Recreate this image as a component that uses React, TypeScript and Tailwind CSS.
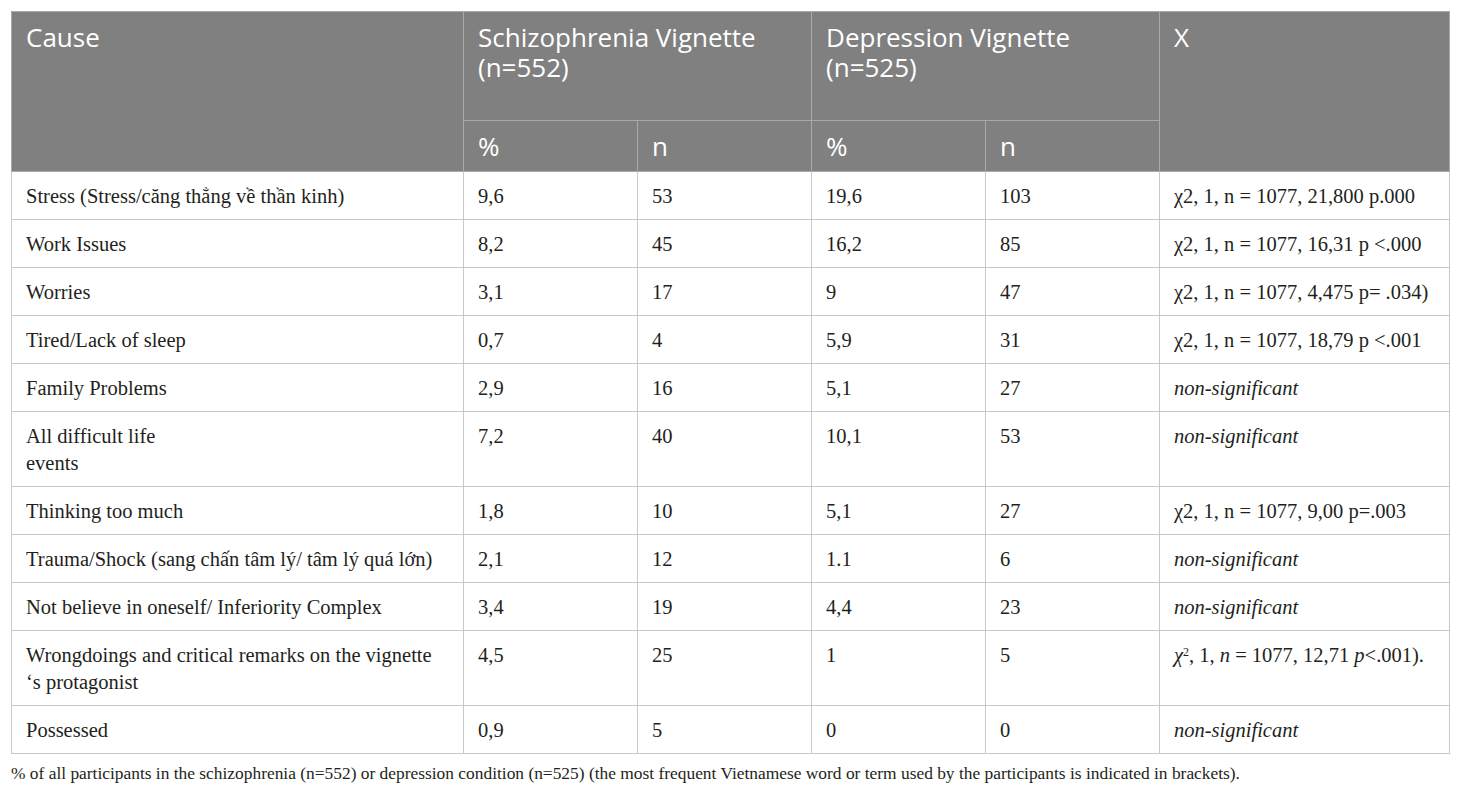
import React, { FC, ReactNode } from 'react';

type Row = {
  cause: ReactNode;
  sp: string;
  sn: string;
  dp: string;
  dn: string;
  x: ReactNode;
};

const NS = <span className="italic">non-significant</span>;

const rows: Row[] = [
  { cause: 'Stress (Stress/căng thẳng về thần kinh)', sp: '9,6', sn: '53', dp: '19,6', dn: '103', x: 'χ2, 1, n = 1077, 21,800 p.000' },
  { cause: 'Work Issues', sp: '8,2', sn: '45', dp: '16,2', dn: '85', x: 'χ2, 1, n = 1077, 16,31 p <.000' },
  { cause: 'Worries', sp: '3,1', sn: '17', dp: '9', dn: '47', x: 'χ2, 1, n = 1077, 4,475 p= .034)' },
  { cause: 'Tired/Lack of sleep', sp: '0,7', sn: '4', dp: '5,9', dn: '31', x: 'χ2, 1, n = 1077, 18,79 p <.001' },
  { cause: 'Family Problems', sp: '2,9', sn: '16', dp: '5,1', dn: '27', x: NS },
  {
    cause: (
      <>
        All difficult life
        <br />
        events
      </>
    ),
    sp: '7,2',
    sn: '40',
    dp: '10,1',
    dn: '53',
    x: NS,
  },
  { cause: 'Thinking too much', sp: '1,8', sn: '10', dp: '5,1', dn: '27', x: 'χ2, 1, n = 1077, 9,00 p=.003' },
  { cause: 'Trauma/Shock (sang chấn tâm lý/ tâm lý quá lớn)', sp: '2,1', sn: '12', dp: '1.1', dn: '6', x: NS },
  { cause: 'Not believe in oneself/ Inferiority Complex', sp: '3,4', sn: '19', dp: '4,4', dn: '23', x: NS },
  {
    cause: (
      <>
        Wrongdoings and critical remarks on the vignette
        <br />
        ‘s protagonist
      </>
    ),
    sp: '4,5',
    sn: '25',
    dp: '1',
    dn: '5',
    x: (
      <>
        <span className="italic">χ</span>
        <sup className="text-[12px]">2</sup>, 1, <span className="italic">n</span> = 1077, 12,71{' '}
        <span className="italic">p</span>&lt;.001).
      </>
    ),
  },
  { cause: 'Possessed', sp: '0,9', sn: '5', dp: '0', dn: '0', x: NS },
];

const th =
  'border border-[#a9a9a9] px-[14px] text-left align-top font-normal text-white';
const td = 'border border-[#c8c8c8] px-[14px] pt-[11px] pb-[9px] align-top';

const App: FC = () => {
  return (
    <div className="min-h-[793px] w-[1460px] bg-white pl-[11px] pt-[11px]">
      <table className="w-[1438px] table-fixed border-collapse border border-[#c8c8c8]">
        <colgroup>
          <col className="w-[452px]" />
          <col className="w-[174px]" />
          <col className="w-[174px]" />
          <col className="w-[174px]" />
          <col className="w-[174px]" />
          <col className="w-[290px]" />
        </colgroup>
        <thead className="bg-[#808080] font-['Open_Sans',sans-serif] text-[26px] leading-[30px]">
          <tr className="h-[109px]">
            <th rowSpan={2} className={`${th} pt-[10px]`}>
              Cause
            </th>
            <th colSpan={2} className={`${th} pt-[10px]`}>
              Schizophrenia Vignette
              <br />
              (n=552)
            </th>
            <th colSpan={2} className={`${th} pt-[10px]`}>
              Depression Vignette
              <br />
              (n=525)
            </th>
            <th rowSpan={2} className={`${th} pt-[10px]`}>
              X
            </th>
          </tr>
          <tr className="h-[51px]">
            <th className={`${th} pt-[10px]`}>%</th>
            <th className={`${th} pt-[10px]`}>n</th>
            <th className={`${th} pt-[10px]`}>%</th>
            <th className={`${th} pt-[10px]`}>n</th>
          </tr>
        </thead>
        <tbody className="font-['Liberation_Serif',serif] text-[20.5px] leading-[27px] text-[#231f20]">
          {rows.map((r, i) => (
            <tr key={i}>
              <td className={td}>{r.cause}</td>
              <td className={td}>{r.sp}</td>
              <td className={td}>{r.sn}</td>
              <td className={td}>{r.dp}</td>
              <td className={td}>{r.dn}</td>
              <td className={td}>{r.x}</td>
            </tr>
          ))}
        </tbody>
      </table>
      <p className="mt-[7px] whitespace-nowrap font-['Liberation_Serif',serif] text-[17.4px] leading-[24px] text-[#231f20]">
        % of all participants in the schizophrenia (n=552) or depression condition (n=525) (the most frequent Vietnamese
        word or term used by the participants is indicated in brackets).
      </p>
    </div>
  );
};

export default App;
